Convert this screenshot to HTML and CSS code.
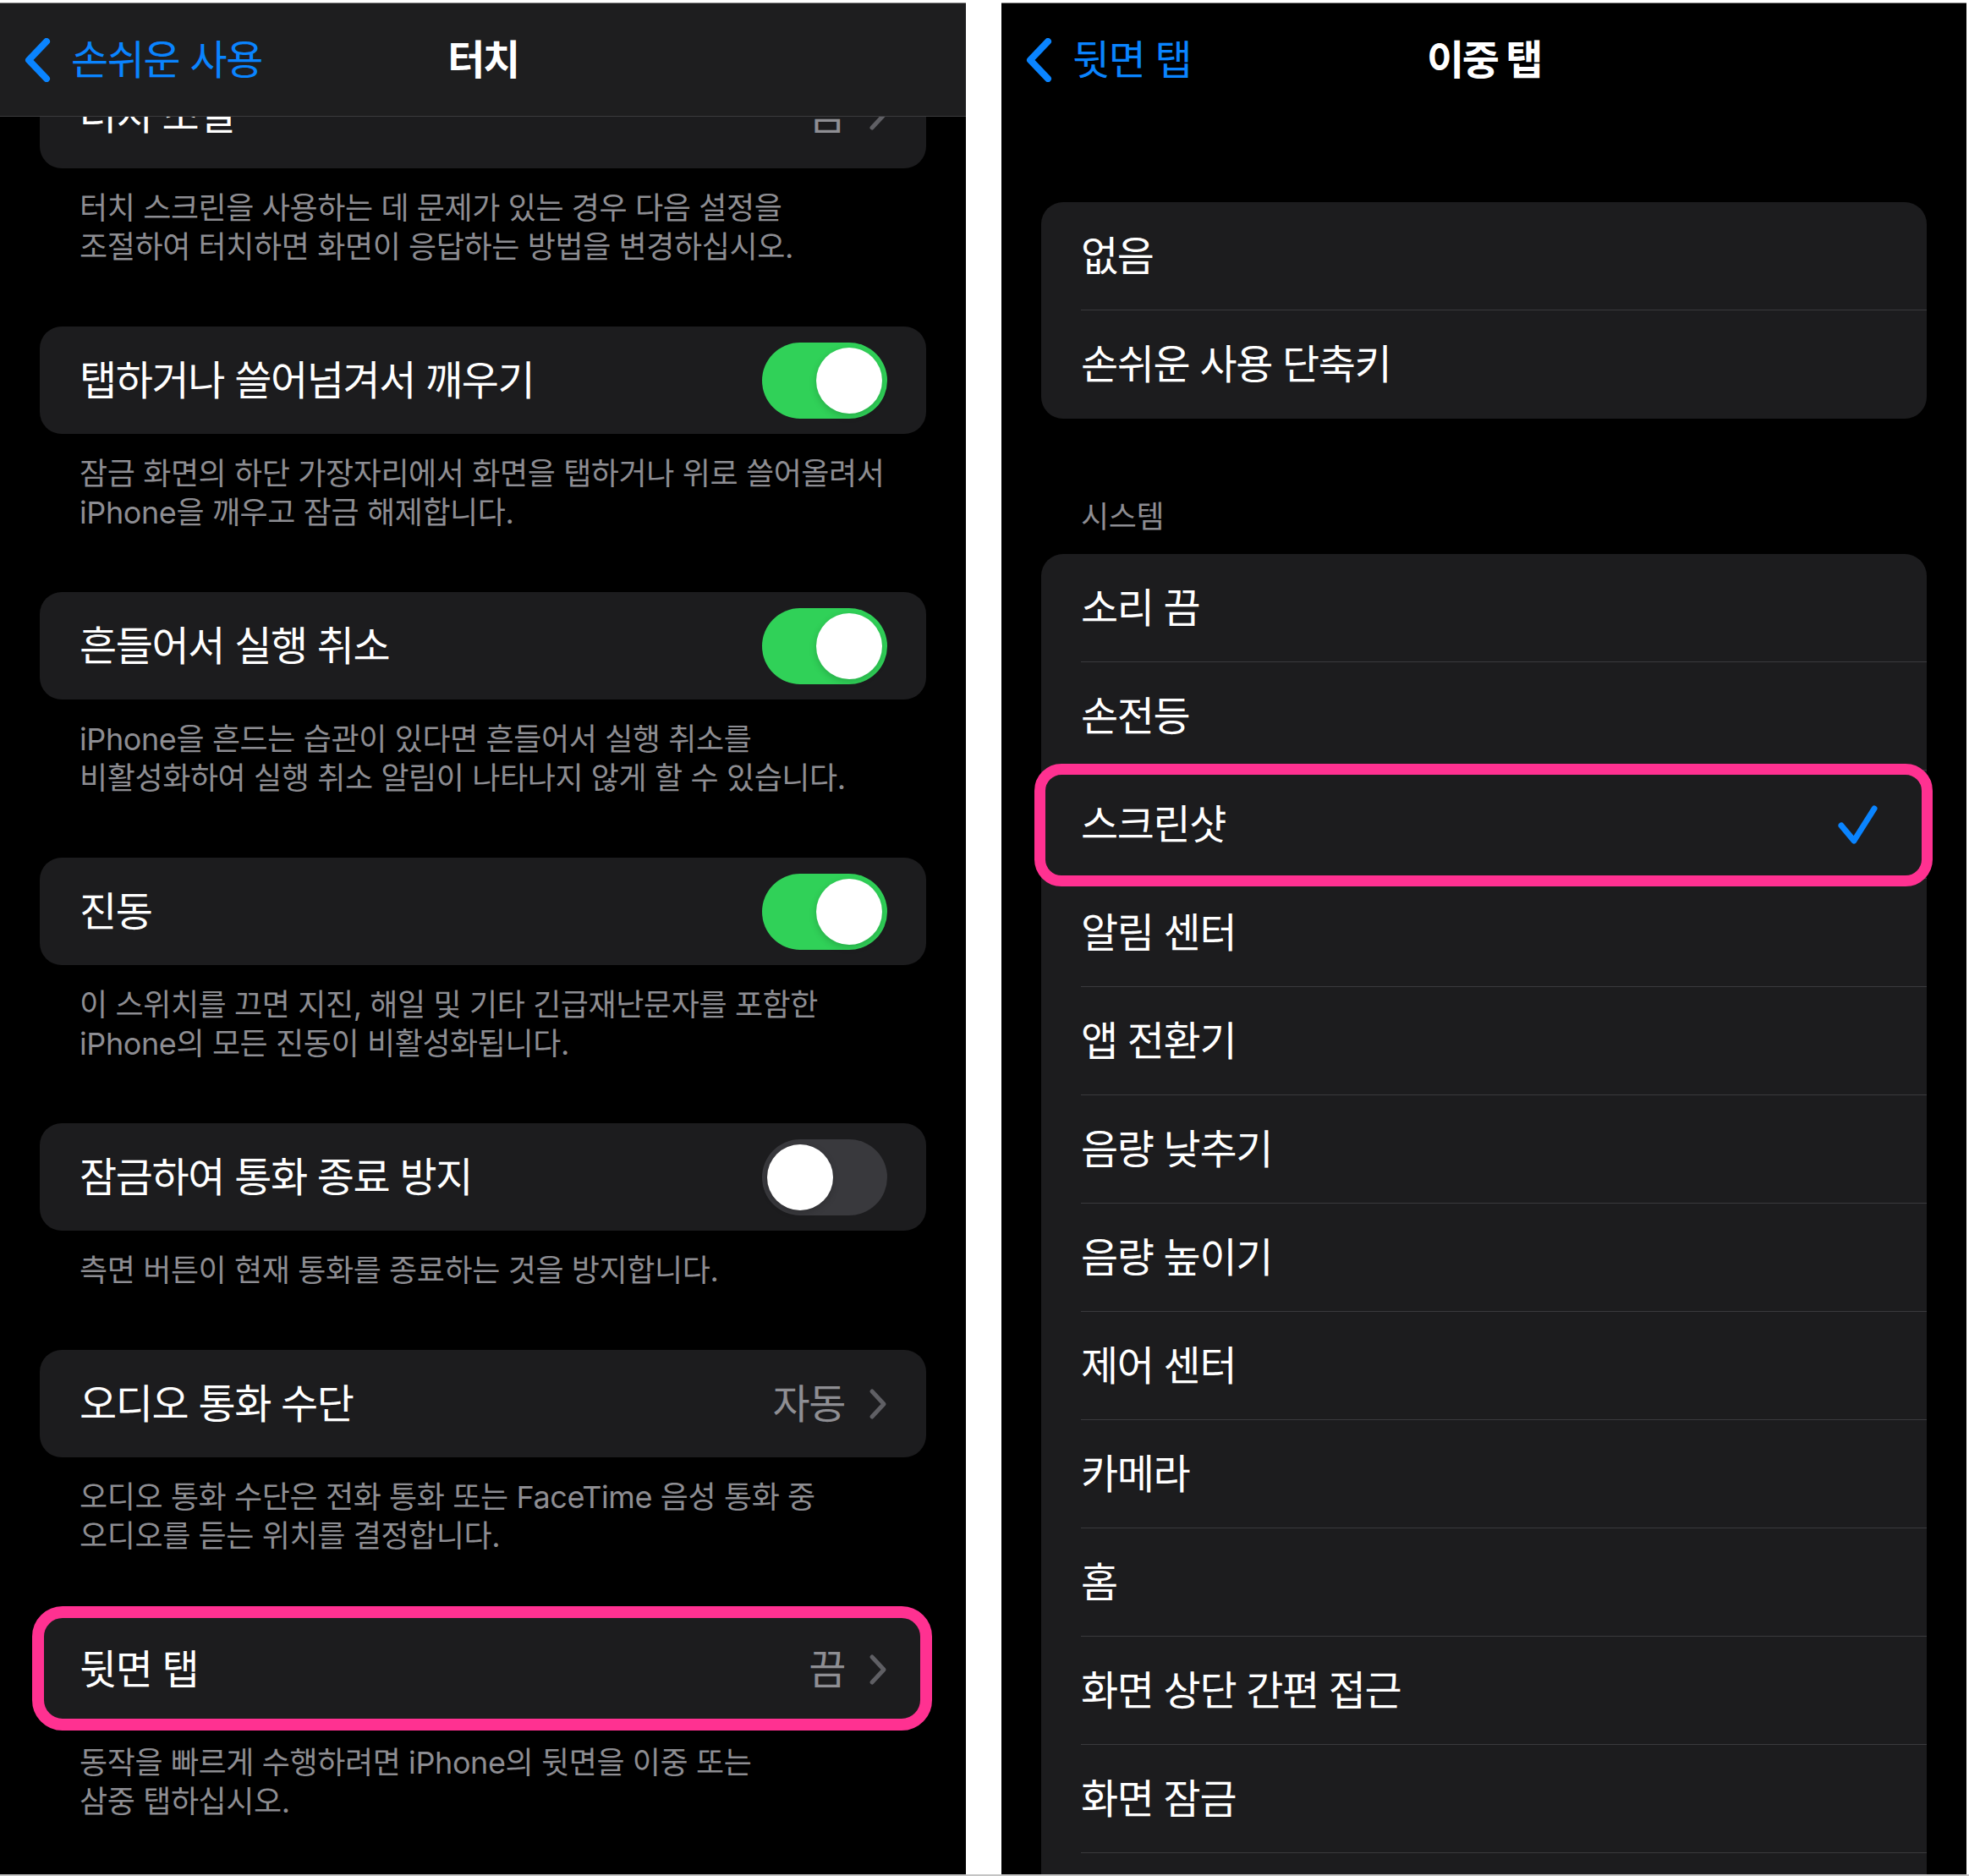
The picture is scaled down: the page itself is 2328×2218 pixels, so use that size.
FILE: index.html
```html
<!DOCTYPE html>
<html lang="ko">
<head>
<meta charset="utf-8">
<title>터치 / 이중 탭</title>
<link rel="stylesheet" href="styles.css">
</head>
<body>
<div class="screen">
  <section class="panel">
    <header class="nav nav-solid">
      <div class="back">
        <svg class="back-chev" viewBox="0 0 32 52" width="32" height="52"><path d="M27 4 L6 26 L27 48"/></svg>
        <span>손쉬운 사용</span>
      </div>
      <h1 class="title">터치</h1>
      <div></div>
    </header>
    <div class="scroll">
      <div class="group first">
        <div class="cell"><span class="label">터치 조절</span><span class="value">끔</span><svg class="chev" viewBox="0 0 22 38" width="22" height="38"><path d="M4 4 L18 19 L4 34"/></svg></div>
      </div>
      <p class="footer">터치 스크린을 사용하는 데 문제가 있는 경우 다음 설정을<br>조절하여 터치하면 화면이 응답하는 방법을 변경하십시오.</p>

      <div class="group">
        <div class="cell"><span class="label">탭하거나 쓸어넘겨서 깨우기</span><span class="switch on"><span class="knob"></span></span></div>
      </div>
      <p class="footer">잠금 화면의 하단 가장자리에서 화면을 탭하거나 위로 쓸어올려서<br>iPhone을 깨우고 잠금 해제합니다.</p>

      <div class="group">
        <div class="cell"><span class="label">흔들어서 실행 취소</span><span class="switch on"><span class="knob"></span></span></div>
      </div>
      <p class="footer">iPhone을 흔드는 습관이 있다면 흔들어서 실행 취소를<br>비활성화하여 실행 취소 알림이 나타나지 않게 할 수 있습니다.</p>

      <div class="group">
        <div class="cell"><span class="label">진동</span><span class="switch on"><span class="knob"></span></span></div>
      </div>
      <p class="footer">이 스위치를 끄면 지진, 해일 및 기타 긴급재난문자를 포함한<br>iPhone의 모든 진동이 비활성화됩니다.</p>

      <div class="group">
        <div class="cell"><span class="label">잠금하여 통화 종료 방지</span><span class="switch"><span class="knob"></span></span></div>
      </div>
      <p class="footer">측면 버튼이 현재 통화를 종료하는 것을 방지합니다.</p>

      <div class="group">
        <div class="cell"><span class="label">오디오 통화 수단</span><span class="value">자동</span><svg class="chev" viewBox="0 0 22 38" width="22" height="38"><path d="M4 4 L18 19 L4 34"/></svg></div>
      </div>
      <p class="footer">오디오 통화 수단은 전화 통화 또는 FaceTime 음성 통화 중<br>오디오를 듣는 위치를 결정합니다.</p>

      <div class="group">
        <div class="cell highlight hl-left"><span class="label">뒷면 탭</span><span class="value">끔</span><svg class="chev" viewBox="0 0 22 38" width="22" height="38"><path d="M4 4 L18 19 L4 34"/></svg></div>
      </div>
      <p class="footer">동작을 빠르게 수행하려면 iPhone의 뒷면을 이중 또는<br>삼중 탭하십시오.</p>
    </div>
  </section>

  <section class="panel">
    <header class="nav">
      <div class="back">
        <svg class="back-chev" viewBox="0 0 32 52" width="32" height="52"><path d="M27 4 L6 26 L27 48"/></svg>
        <span>뒷면 탭</span>
      </div>
      <h1 class="title">이중 탭</h1>
      <div></div>
    </header>
    <div class="scroll list">
      <div class="group">
        <div class="row"><div class="row-body"><span class="label">없음</span></div></div>
        <div class="row"><div class="row-body last"><span class="label">손쉬운 사용 단축키</span></div></div>
      </div>
      <p class="section-head">시스템</p>
      <div class="group">
        <div class="row"><div class="row-body"><span class="label">소리 끔</span></div></div>
        <div class="row"><div class="row-body"><span class="label">손전등</span></div></div>
        <div class="row highlight hl-right"><div class="row-body"><span class="label">스크린샷</span><svg class="check" viewBox="0 0 48 46" width="48" height="46"><path d="M4 24 L19 42 L43 4"/></svg></div></div>
        <div class="row"><div class="row-body"><span class="label">알림 센터</span></div></div>
        <div class="row"><div class="row-body"><span class="label">앱 전환기</span></div></div>
        <div class="row"><div class="row-body"><span class="label">음량 낮추기</span></div></div>
        <div class="row"><div class="row-body"><span class="label">음량 높이기</span></div></div>
        <div class="row"><div class="row-body"><span class="label">제어 센터</span></div></div>
        <div class="row"><div class="row-body"><span class="label">카메라</span></div></div>
        <div class="row"><div class="row-body"><span class="label">홈</span></div></div>
        <div class="row"><div class="row-body"><span class="label">화면 상단 간편 접근</span></div></div>
        <div class="row"><div class="row-body"><span class="label">화면 잠금</span></div></div>
        <div class="row"><div class="row-body"><span class="label">흔들기</span></div></div>
      </div>
    </div>
  </section>
</div>
</body>
</html>
```

FILE: styles.css
```css
html, body {
  margin: 0;
  padding: 0;
  background: #ffffff;
}

body {
  width: 2328px;
  height: 2218px;
  overflow: hidden;
  font-family: "Inter", "Noto Sans CJK KR", sans-serif;
  color: #ffffff;
}

.screen {
  display: flex;
  gap: 42px;
  padding-top: 3px;
  border-bottom: 2px solid #c4c4c4;
  box-sizing: border-box;
  height: 2218px;
}

.panel {
  width: 1142px;
  height: 2213px;
  background: #000000;
  border-top: 1px solid #8a8a8a;
  box-sizing: border-box;
  display: flex;
  flex-direction: column;
  overflow: hidden;
}

.panel + .panel {
  width: 1141px;
}

/* ---------- navigation bar ---------- */
.nav {
  flex: none;
  height: 133px;
  display: grid;
  grid-template-columns: 1fr auto 1fr;
  align-items: center;
  padding: 0 28px;
  position: relative;
  z-index: 2;
}

.nav-solid {
  background: #1e1e1f;
  border-bottom: 1px solid #3b3b3d;
}

.back {
  display: flex;
  align-items: center;
  gap: 24px;
  color: #0a84ff;
  font-size: 48px;
  letter-spacing: -1.4px;
  line-height: 1.2;
}

.back-chev {
  flex: none;
  fill: none;
  stroke: #0a84ff;
  stroke-width: 8;
  stroke-linecap: round;
  stroke-linejoin: round;
}

.title {
  margin: 0;
  font-size: 48px;
  font-weight: 600;
  letter-spacing: -2.4px;
  line-height: 1.2;
  color: #ffffff;
}

/* ---------- scroll content ---------- */
.scroll {
  flex: 1;
  overflow: hidden;
}

.group {
  margin: 0 47px;
  background: #1c1c1e;
  border-radius: 26px;
}

.group.first {
  margin-top: -66px;
}

.cell {
  height: 127px;
  display: flex;
  align-items: center;
  padding: 0 46px 0 47px;
  position: relative;
}

.label {
  flex: 1;
  font-size: 48px;
  letter-spacing: -1.4px;
  line-height: 1.2;
  color: #ffffff;
  white-space: nowrap;
}

.value {
  font-size: 48px;
  letter-spacing: -1.4px;
  line-height: 1.2;
  color: #8e8e93;
}

.chev {
  flex: none;
  margin-left: 28px;
  fill: none;
  stroke: #5f5f64;
  stroke-width: 5;
  stroke-linecap: round;
  stroke-linejoin: round;
}

.footer {
  margin: 0 0 71px;
  padding: 24px 47px 0 94px;
  font-size: 36px;
  letter-spacing: -0.4px;
  line-height: 46px;
  color: #8d8d92;
  white-space: nowrap;
}

/* ---------- switches ---------- */
.switch {
  flex: none;
  width: 148px;
  height: 90px;
  border-radius: 45px;
  background: #39393d;
  box-sizing: border-box;
  padding: 6px;
  display: flex;
  justify-content: flex-start;
}

.switch.on {
  background: #30d158;
  justify-content: flex-end;
}

.knob {
  width: 78px;
  height: 78px;
  border-radius: 50%;
  background: #ffffff;
  box-shadow: 0 3px 8px rgba(0, 0, 0, 0.18);
}

/* ---------- right list ---------- */
.list .group:first-child {
  margin-top: 102px;
}

.row {
  height: 128px;
  padding-left: 47px;
  display: flex;
  position: relative;
}

.row-body {
  flex: 1;
  display: flex;
  align-items: center;
  border-bottom: 1px solid #3a3a3d;
  padding-right: 57px;
}

.row-body.last {
  border-bottom: none;
}

.section-head {
  margin: 0;
  padding: 93px 47px 20px 94px;
  font-size: 36px;
  letter-spacing: -0.4px;
  line-height: 47px;
  color: #8d8d92;
}

.check {
  flex: none;
  fill: none;
  stroke: #0a84ff;
  stroke-width: 7;
  stroke-linecap: round;
  stroke-linejoin: round;
}

/* ---------- pink highlight overlay ---------- */
.highlight::after {
  content: "";
  position: absolute;
  border: 14px solid #ff3191;
  border-radius: 32px;
  pointer-events: none;
}

.hl-left::after {
  top: -11px;
  bottom: -9px;
  left: -9px;
  right: -7px;
  border-radius: 36px;
}

.hl-right::after {
  top: -8px;
  bottom: -9px;
  left: -8px;
  right: -7px;
  border-width: 13px;
}
```
